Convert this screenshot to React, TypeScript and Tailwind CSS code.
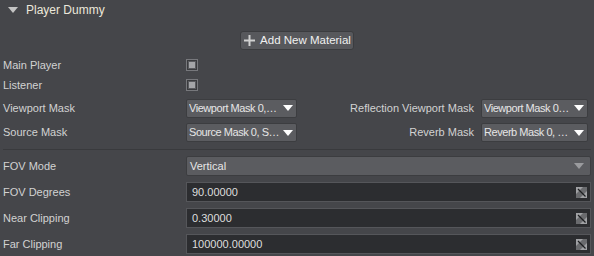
import React from "react";

function Caret({ className = "" }: { className?: string }) {
  return (
    <svg className={className} width="10" height="6" viewBox="0 0 10 6">
      <polygon points="0,0 10,0 5,6" fill="currentColor" />
    </svg>
  );
}

function Checkbox() {
  return (
    <div className="flex h-[12px] w-[12px] items-center justify-center border border-[#77787c] bg-[#3a3b3e]">
      <div className="h-[8px] w-[8px] border border-[#5a5b5f] bg-[#a4a5a8]" />
    </div>
  );
}

function Dropdown({ text, className = "" }: { text: string; className?: string }) {
  return (
    <div
      className={`flex h-[19px] items-center justify-between gap-[2px] rounded-[2px] border border-[#3c3d40] bg-[#5b5c60] pl-[2px] pr-[3px] text-[#e6e6e6] ${className}`}
    >
      <span className="overflow-hidden whitespace-nowrap tracking-[-0.45px]">{text}</span>
      <Caret className="shrink-0 text-white" />
    </div>
  );
}

function ResizeIcon() {
  return (
    <svg width="11" height="11" viewBox="0 0 11 11">
      <rect x="0" y="0" width="11" height="11" fill="#6a6b6e" />
      <polygon points="0,0 7,0 0,7" fill="#a0a1a4" />
      <polygon points="11,4 11,11 4,11" fill="#a0a1a4" />
      <line x1="2" y1="2" x2="9.5" y2="9.5" stroke="#1c1d1f" strokeWidth="1.2" />
    </svg>
  );
}

function NumberField({ value }: { value: string }) {
  return (
    <div className="flex h-[20px] flex-1 items-center justify-between border border-[#55565a] bg-[#2c2d30] pl-[5px] pr-[3px] text-[#dedede]">
      <span>{value}</span>
      <ResizeIcon />
    </div>
  );
}

export default function App() {
  return (
    <div
      className="h-[256px] w-[594px] overflow-hidden bg-[#45464a] text-[11px] text-[#d2d2d2]"
      style={{ fontFamily: '"Liberation Sans", Arial, sans-serif' }}
    >
      {/* header */}
      <div className="flex h-[19px] items-center gap-[8px] pl-[8px]">
        <Caret className="text-[#c4c4c4]" />
        <span className="text-[12px] text-[#ece8da]">Player Dummy</span>
      </div>

      {/* add material */}
      <div className="flex justify-center pt-[12px] pb-[5px]">
        <button className="flex h-[19px] items-center gap-[5px] rounded-[3px] border border-[#3b3c3f] bg-[#57585c] pl-[3px] pr-[2px] text-[11.5px] text-[#f0f0f0]">
          <svg width="11" height="11" viewBox="0 0 11 11">
            <rect x="4.5" y="0" width="2" height="11" fill="#d0d0d0" />
            <rect x="0" y="4.5" width="11" height="2" fill="#d0d0d0" />
          </svg>
          Add New Material
        </button>
      </div>

      <div className="px-[3px]">
        <div className="flex h-[20px] items-center">
          <span className="w-[183px]">Main Player</span>
          <Checkbox />
        </div>
        <div className="flex h-[20px] items-center">
          <span className="w-[183px]">Listener</span>
          <Checkbox />
        </div>

        <div className="flex h-[25px] items-center pt-[1px]">
          <span className="w-[183px]">Viewport Mask</span>
          <Dropdown text="Viewport Mask 0,…" className="w-[111px]" />
          <span className="flex-1 pr-[7px] text-right">Reflection Viewport Mask</span>
          <Dropdown text="Viewport Mask 0…" className="mr-[3px] w-[107px]" />
        </div>
        <div className="flex h-[25px] items-center">
          <span className="w-[183px]">Source Mask</span>
          <Dropdown text="Source Mask 0, S…" className="w-[111px]" />
          <span className="flex-1 pr-[7px] text-right">Reverb Mask</span>
          <Dropdown text="Reverb Mask 0, …" className="mr-[3px] w-[107px]" />
        </div>

        <div className="mt-[4px] mb-[3px] h-px bg-[#393a3d]" />

        <div className="flex h-[26px] items-center">
          <span className="w-[183px]">FOV Mode</span>
          <div className="flex h-[20px] flex-1 items-center justify-between rounded-[2px] border border-[#3c3d40] bg-[#5b5c60] pl-[3px] pr-[6px] text-[#e6e6e6]">
            <span>Vertical</span>
            <Caret className="text-[#9a9b9e]" />
          </div>
        </div>
        <div className="flex h-[26px] items-center">
          <span className="w-[183px]">FOV Degrees</span>
          <NumberField value="90.00000" />
        </div>
        <div className="flex h-[26px] items-center">
          <span className="w-[183px]">Near Clipping</span>
          <NumberField value="0.30000" />
        </div>
        <div className="flex h-[26px] items-center">
          <span className="w-[183px]">Far Clipping</span>
          <NumberField value="100000.00000" />
        </div>
      </div>
    </div>
  );
}
